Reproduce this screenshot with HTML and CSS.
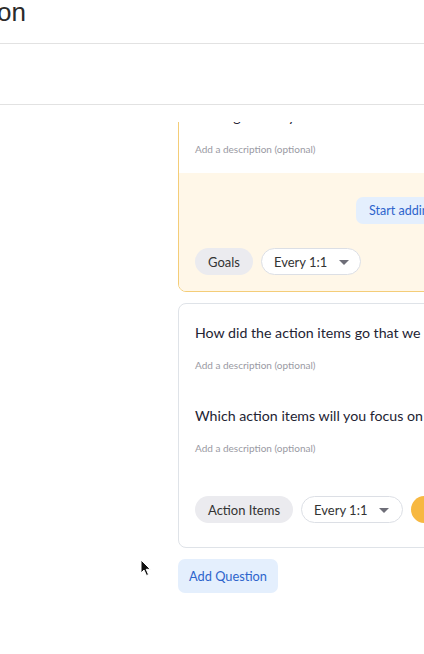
FILE: index.html
```html
<!DOCTYPE html>
<html lang="en">
<head>
<meta charset="utf-8">
<title>Template</title>
<link rel="stylesheet" href="styles.css">
</head>
<body>
<div class="page">
  <header class="header">
    <h1 class="title">on</h1>
  </header>
  <div class="toolbar"></div>
  <main class="content">
    <div class="scroll">
      <div class="scroll-inner">
        <section class="card card-goals">
          <div class="q-list">
            <div class="q">
              <div class="q-text">What goals do you want to work on next?</div>
              <div class="q-desc">Add a description (optional)</div>
            </div>
          </div>
          <div class="goals-band">
            <div class="band-action">
              <button class="btn-soft">Start adding goals</button>
            </div>
            <div class="pills">
              <span class="pill pill-tag">Goals</span>
              <span class="pill pill-select">Every 1:1 <span class="caret"></span></span>
            </div>
          </div>
        </section>

        <section class="card card-plain">
          <div class="q-list">
            <div class="q">
              <div class="q-text">How did the action items go that we agreed on last time?</div>
              <div class="q-desc">Add a description (optional)</div>
            </div>
            <div class="q">
              <div class="q-text">Which action items will you focus on next?</div>
              <div class="q-desc">Add a description (optional)</div>
            </div>
          </div>
          <div class="card-footer">
            <div class="pills">
              <span class="pill pill-tag">Action Items</span>
              <span class="pill pill-select pill-wide">Every 1:1 <span class="caret"></span></span>
              <span class="dot"></span>
            </div>
          </div>
        </section>

        <button class="btn-soft btn-add">Add Question</button>
      </div>
    </div>
  </main>
  <svg class="cursor" width="12" height="18" viewBox="0 0 12 18" aria-hidden="true">
    <path d="M1 1 L1 14 L4 11 L6.5 16.5 L8.5 15.6 L6.2 10.3 L10.3 10.3 Z" fill="#111" stroke="#fff" stroke-width="1" stroke-linejoin="round"/>
  </svg>
</div>
</body>
</html>
```
FILE: styles.css
```css
* { box-sizing: border-box; }
html, body {
  margin: 0;
  padding: 0;
  background: #ffffff;
}
body {
  width: 424px;
  height: 654px;
  overflow: hidden;
  font-family: Lato, "Noto Sans", sans-serif;
  color: #222;
}
.page {
  position: relative;
  width: 424px;
  height: 654px;
  overflow: hidden;
}
.header {
  height: 44px;
  border-bottom: 1px solid #e2e2e2;
  overflow: hidden;
}
.title {
  margin: 0 0 0 -3px;
  font-family: "Liberation Sans", Arial, sans-serif;
  font-weight: 400;
  font-size: 26px;
  line-height: 24px;
  color: #2b2b2b;
}
.toolbar {
  height: 61px;
  border-bottom: 1px solid #e2e2e2;
}
.content {
  padding-left: 178px;
}
.scroll {
  margin-top: 17px;
  height: 547px;
  overflow: hidden;
}
.scroll-inner {
  margin-top: -35px;
  width: 320px;
}
.card {
  width: 320px;
  border: 1px solid #dfe3e8;
  border-radius: 8px;
  background: #fff;
  overflow: hidden;
}
.card-goals {
  border-color: #f4cd78;
}
.card-plain {
  margin-top: 11px;
}
.q-list {
  padding: 19px 0 17px 16px;
}
.q + .q {
  margin-top: 34px;
}
.q-text {
  font-size: 14.2px;
  line-height: 20px;
  color: #232333;
  white-space: nowrap;
}
.q-desc {
  margin-top: 15px;
  font-size: 10px;
  line-height: 14px;
  color: #9a9aa3;
  white-space: nowrap;
}
.goals-band {
  background: #fff7e8;
  padding: 24px 0 16px 16px;
}
.band-action {
  display: flex;
  padding-left: 161px;
  margin-bottom: 24px;
}
.btn-soft {
  border: 0;
  background: #e4effd;
  color: #2d64cc;
  font-family: Lato, "Noto Sans", sans-serif;
  font-size: 12.5px;
  border-radius: 7px;
  height: 27px;
  padding: 0 13px;
  white-space: nowrap;
  cursor: pointer;
}
.pills {
  display: flex;
  align-items: center;
  gap: 8px;
}
.pill {
  display: inline-flex;
  align-items: center;
  height: 27px;
  border-radius: 14px;
  font-size: 13px;
  color: #333;
  white-space: nowrap;
}
.pill-tag {
  background: #ebebef;
  padding: 0 13px;
}
.pill-select {
  background: #fff;
  border: 1px solid #dcdfe5;
  width: 100px;
  padding-left: 12px;
  gap: 12px;
}
.pill-wide {
  width: 102px;
}
.caret {
  width: 0;
  height: 0;
  border-left: 5px solid transparent;
  border-right: 5px solid transparent;
  border-top: 5px solid #6e6e78;
  margin-top: 2px;
}
.dot {
  width: 27px;
  height: 27px;
  border-radius: 50%;
  background: #f7b841;
  flex: none;
}
.card-footer {
  padding: 24px 0 24px 16px;
}
.btn-add {
  display: block;
  margin-top: 11px;
  height: 34px;
  width: 100px;
  padding: 0;
  font-size: 12.8px;
}
.cursor {
  position: absolute;
  left: 140px;
  top: 559px;
}
```
